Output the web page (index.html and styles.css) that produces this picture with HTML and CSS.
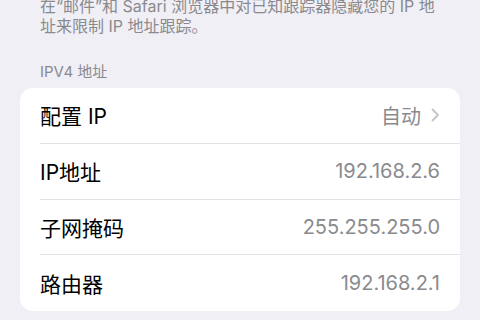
FILE: index.html
```html
<!DOCTYPE html>
<html lang="zh-CN">

<head>
    <meta charset="UTF-8">
    <meta name="viewport" content="width=device-width, initial-scale=1.0">
    <title>Wi-Fi</title>
    <link rel="stylesheet" href="styles.css">
</head>

<body>
    <p class="footnote">在“邮件”和 Safari 浏览器中对已知跟踪器隐藏您的 IP 地址来限制 IP 地址跟踪。</p>

    <h2 class="section-title">IPV4 地址</h2>
    <div class="group">
        <div class="row">
            <span class="label">配置 IP</span>
            <span class="value">自动
                <svg class="chevron" width="9" height="14" viewBox="0 0 9 14">
                    <polyline points="1.5,1.5 7,7 1.5,12.5" fill="none" stroke="#c4c4c8" stroke-width="1.8" stroke-linecap="round" stroke-linejoin="round" />
                </svg>
            </span>
        </div>
        <div class="row">
            <span class="label">IP地址</span>
            <span class="value">192.168.2.6</span>
        </div>
        <div class="row">
            <span class="label">子网掩码</span>
            <span class="value">255.255.255.0</span>
        </div>
        <div class="row">
            <span class="label">路由器</span>
            <span class="value">192.168.2.1</span>
        </div>
    </div>
</body>

</html>
```

FILE: styles.css
```css
body {
    background: #f0eff5;
    font-family: Inter, "Noto Sans CJK SC", sans-serif;
    margin: 0;
    padding: 0 20px;
    overflow: hidden;
}

.footnote {
    margin: -4px 0 0;
    padding: 0 20px;
    font-size: 16px;
    line-height: 20px;
    color: #8a8a8e;
}

.section-title {
    margin: 26px 0 6px;
    padding: 0 20px;
    font-size: 15px;
    font-weight: normal;
    line-height: 20px;
    color: #8a8a8e;
}

.group {
    background: #fff;
    border-radius: 13px;
    padding-left: 20px;
}

.row {
    display: flex;
    justify-content: space-between;
    align-items: center;
    height: 55.75px;
    box-sizing: border-box;
    padding-right: 20px;
    border-bottom: 1px solid #e2e2e6;
}

.row:last-child {
    border-bottom: none;
}

.label {
    font-size: 21px;
    color: #000;
}

.value {
    display: flex;
    align-items: center;
    gap: 10px;
    font-size: 20px;
    color: #8a8a8e;
}

.chevron {
    display: block;
}
```
